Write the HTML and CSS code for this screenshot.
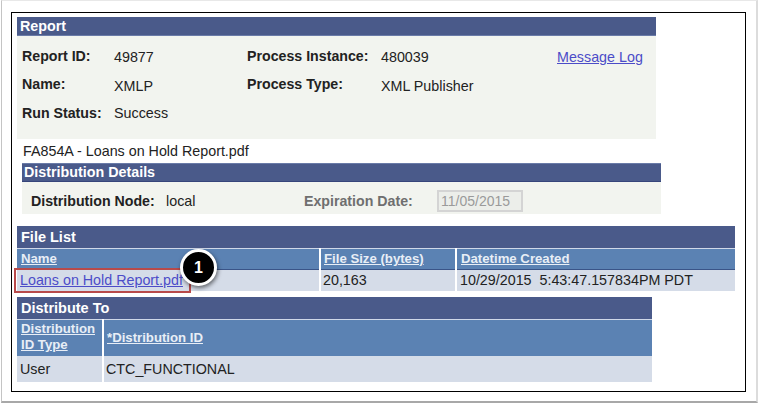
FILE: index.html
```html
<!DOCTYPE html>
<html lang="en">
<head>
  <meta charset="UTF-8">
  <title>Report Detail</title>
  <link rel="stylesheet" href="styles.css">
</head>
<body>
  <div class="shot">
    <div class="frame">
      <!-- Report -->
      <section class="report">
        <h2 class="bar">Report</h2>
        <div class="report-grid">
          <b>Report ID:</b><span class="low">49877</span>
          <b>Process Instance:</b><span class="low">480039</span>
          <a href="#" class="low">Message Log</a>
          <b class="high">Name:</b><span class="low">XMLP</span>
          <b class="high">Process Type:</b><span class="low">XML Publisher</span>
          <i></i>
          <b>Run Status:</b><span>Success</span>
        </div>
      </section>

      <p class="file-title">FA854A - Loans on Hold Report.pdf</p>

      <!-- Distribution Details -->
      <section class="details">
        <h2 class="bar">Distribution Details</h2>
        <div class="details-row">
          <b class="node-label">Distribution Node:</b>
          <span class="node-value">local</span>
          <b class="exp-label">Expiration Date:</b>
          <span class="exp-input">11/05/2015</span>
        </div>
      </section>

      <!-- File List -->
      <section class="file-list">
        <h2 class="bar tall">File List</h2>
        <div class="cols file-cols head">
          <a href="#">Name</a>
          <a href="#">File Size (bytes)</a>
          <a href="#">Datetime Created</a>
        </div>
        <div class="cols file-cols data">
          <a href="#" class="file-link">Loans on Hold Report.pdf</a>
          <span>20,163</span>
          <span>10/29/2015&nbsp; 5:43:47.157834PM PDT</span>
        </div>
      </section>

      <!-- Distribute To -->
      <section class="distribute">
        <h2 class="bar tall">Distribute To</h2>
        <div class="cols dist-cols head two-line">
          <a href="#">Distribution<br>ID Type</a>
          <a href="#">*Distribution ID</a>
        </div>
        <div class="cols dist-cols data tall-row">
          <span>User</span>
          <span>CTC_FUNCTIONAL</span>
        </div>
      </section>

      <!-- callout over the file link -->
      <div class="highlight"></div>
      <div class="badge">1</div>
    </div>
  </div>
</body>
</html>
```

FILE: styles.css
```css
* {
  box-sizing: border-box;
}

body {
  margin: 0;
  background: #fff;
  font-family: "Liberation Sans", Arial, sans-serif;
  font-size: 14.3px;
  color: #222;
}

b {
  font-size: 14.2px;
}

a {
  color: #4c4cc8;
}

.shot {
  width: 757px;
  height: 403px;
  margin-left: 1px;
  padding: 11px 9px 10px 9px;
  border-left: 1px solid #c4c4c4;
  border-right: 2px solid #dcdcdc;
  border-top: 1px solid #e8e8e8;
  border-bottom: 2px solid #a8a8a8;
}

.frame {
  position: relative;
  width: 735px;
  height: 380px;
  padding: 4px 5px;
  border: 1px solid #000;
  background: #fff;
}

.bar {
  margin: 0;
  height: 19px;
  padding-left: 3px;
  background: #4a5a8a;
  border-bottom: 1px solid #6a7ba8;
  color: #fff;
  font-size: 14.3px;
  line-height: 18px;
}

.bar.tall {
  height: 22px;
  padding-left: 4px;
  line-height: 22px;
  font-size: 14.5px;
  border-bottom: 0;
}

.report {
  width: 639px;
  height: 122px;
  background: #f2f4ef;
}

.report-grid {
  display: grid;
  grid-template-columns: 92px 133px 134px 176px auto;
  grid-auto-rows: 28.5px;
  padding: 6px 0 0 5px;
  align-items: center;
  line-height: 24px;
}

/* labels and values do not sit on one line in the original */
.low {
  margin-top: 2px;
}

.high {
  margin-bottom: 2px;
}

.file-title {
  margin: 0;
  height: 24px;
  padding-left: 6px;
  line-height: 24px;
}

.details {
  width: 639px;
  height: 51px;
  margin-left: 5px;
  background: #f2f4ef;
}

.details .bar {
  padding-left: 2px;
  border-top: 1px solid #6a7ba8;
  border-bottom: 1px solid #36457a;
  line-height: 16px;
}

.details-row {
  display: flex;
  align-items: center;
  height: 32px;
  padding: 6px 0 0 9px;
}

.node-label {
  width: 135px;
}

.node-value {
  width: 138px;
}

.exp-label {
  width: 133px;
  color: #6f6f6f;
}

.exp-input {
  width: 86px;
  height: 22px;
  border: 2px solid #d4d4d4;
  background: #eceeea;
  color: #9a9a9a;
  font-size: 14px;
  line-height: 18px;
  padding-left: 2px;
}

.file-list {
  width: 718px;
  margin-top: 12px;
}

.cols {
  display: grid;
  column-gap: 2px;
}

.file-cols {
  grid-template-columns: 302px 134px 278px;
}

.dist-cols {
  grid-template-columns: 85px 548px;
}

.head {
  height: 22px;
}

.head a {
  display: block;
  padding-left: 4px;
  background: #5b82b3;
  border-top: 1px solid #d0d8e8;
  border-bottom: 1px solid #3a5488;
  color: #e8eef6;
  font-weight: bold;
  font-size: 13.2px;
  line-height: 20px;
}

.file-cols.head a + a {
  padding-left: 3px;
}

.file-cols.head a:last-child {
  padding-left: 4px;
}

.data {
  height: 21px;
  line-height: 21px;
}

.data span {
  padding-left: 2px;
  background: #d5dce8;
}

.file-cols.data span:last-child {
  padding-left: 3px;
}

.file-cols.data .file-link {
  padding-left: 3px;
  background: #d5dce8;
}

.distribute {
  width: 635px;
  margin-top: 6px;
}

.dist-cols.two-line {
  height: 37px;
}

.two-line a {
  line-height: 16px;
  padding-top: 1px;
}

.two-line a + a {
  padding: 0 0 0 3px;
  line-height: 36px;
}

.tall-row {
  height: 26px;
  line-height: 26px;
}

.tall-row span:first-child {
  padding-left: 3px;
}

.highlight {
  position: absolute;
  left: 2px;
  top: 255px;
  width: 177px;
  height: 25px;
  border: 2px solid #b84a4a;
}

.badge {
  position: absolute;
  left: 168px;
  top: 236px;
  width: 37px;
  height: 37px;
  border: 3px solid #fff;
  border-radius: 50%;
  background: #000;
  box-shadow: 1px 2px 4px rgba(0, 0, 0, 0.55);
  color: #fff;
  font-weight: bold;
  font-size: 16px;
  line-height: 31px;
  text-align: center;
}
```
